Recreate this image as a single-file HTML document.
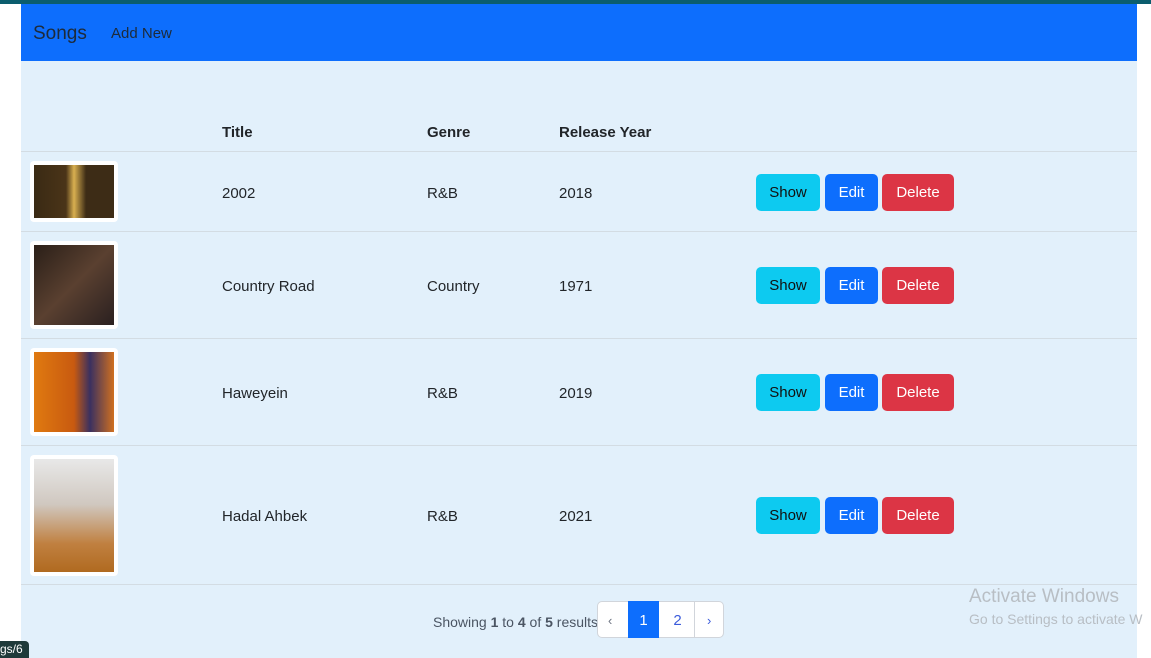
<!DOCTYPE html>
<html><head><style>
body{margin:0;width:1151px;height:658px;background:#fff;font-family:"Liberation Sans",sans-serif;position:relative;overflow:hidden;color:#212529}
.top{position:absolute;left:0;top:0;width:1151px;height:4px;background:#0b5d6e}
.nav{position:absolute;left:21px;top:4px;width:1116px;height:57px;background:#0d6efd}
.nav .b{position:absolute;left:12px;top:19px;font-size:19px;color:#1d2b3a}
.nav .l{position:absolute;left:90px;top:21px;font-size:15px;color:#1d2b3a}
.main{position:absolute;left:21px;top:61px;width:1116px;height:597px;background:#e2f0fb}
.t{position:absolute;font-size:15px}
.th{font-weight:bold}
.hr{position:absolute;left:21px;width:1116px;height:1px;background:#d3dce3}
.img{position:absolute;left:30px;width:88px;background:#fff;border-radius:4px;box-sizing:border-box;padding:4px}
.img div{width:100%;height:100%}
.btn{position:absolute;height:37px;border-radius:5px;font-size:15px;line-height:37px;text-align:center}
.s{background:#0dcaf0;color:#111;width:64px;left:756px}
.e{background:#0d6efd;color:#fff;width:53px;left:825px}
.d{background:#dc3545;color:#fff;width:72px;left:882px}
</style></head><body>
<div class="top"></div>
<div class="nav"><span class="b">Songs</span><span class="l">Add New</span></div>
<div class="main"></div>
<div class="t th" style="left:222px;top:124px">Title</div>
<div class="t th" style="left:427px;top:124px">Genre</div>
<div class="t th" style="left:559px;top:124px">Release Year</div>
<div class="hr" style="top:151px"></div>
<div class="hr" style="top:231px"></div>
<div class="hr" style="top:338px"></div>
<div class="hr" style="top:445px"></div>
<div class="hr" style="top:584px"></div>

<div class="img" style="top:161px;height:61px"><div style="background:linear-gradient(90deg,#3a2a14,#4a3418 40%,#d9b050 50%,#3d2c16 65%)"></div></div>
<div class="img" style="top:241px;height:88px"><div style="background:linear-gradient(135deg,#2a1f18,#5a4030 50%,#2a2020)"></div></div>
<div class="img" style="top:348px;height:88px"><div style="background:linear-gradient(90deg,#e07a10,#c85a10 50%,#3a3060 70%,#d07020)"></div></div>
<div class="img" style="top:455px;height:121px"><div style="background:linear-gradient(180deg,#e8e8e8,#d0c8c0 40%,#c08040 75%,#b06a20)"></div></div>

<div class="t" style="left:222px;top:185px">2002</div><div class="t" style="left:427px;top:185px">R&amp;B</div><div class="t" style="left:559px;top:185px">2018</div>
<div class="btn s" style="top:174px;line-height:38px">Show</div><div class="btn e" style="top:174px;line-height:38px">Edit</div><div class="btn d" style="top:174px;line-height:38px">Delete</div>
<div class="t" style="left:222px;top:278px">Country Road</div><div class="t" style="left:427px;top:278px">Country</div><div class="t" style="left:559px;top:278px">1971</div>
<div class="btn s" style="top:267px;line-height:38px">Show</div><div class="btn e" style="top:267px;line-height:38px">Edit</div><div class="btn d" style="top:267px;line-height:38px">Delete</div>
<div class="t" style="left:222px;top:385px">Haweyein</div><div class="t" style="left:427px;top:385px">R&amp;B</div><div class="t" style="left:559px;top:385px">2019</div>
<div class="btn s" style="top:374px;line-height:38px">Show</div><div class="btn e" style="top:374px;line-height:38px">Edit</div><div class="btn d" style="top:374px;line-height:38px">Delete</div>
<div class="t" style="left:222px;top:508px">Hadal Ahbek</div><div class="t" style="left:427px;top:508px">R&amp;B</div><div class="t" style="left:559px;top:508px">2021</div>
<div class="btn s" style="top:497px;line-height:38px">Show</div><div class="btn e" style="top:497px;line-height:38px">Edit</div><div class="btn d" style="top:497px;line-height:38px">Delete</div>

<div class="t" style="left:433px;top:614px;font-size:14px;color:#4b5563">Showing <b>1</b> to <b>4</b> of <b>5</b> results</div>
<div style="position:absolute;left:597px;top:601px;width:127px;height:37px;background:#fff;border:1px solid #d1d5db;border-radius:5px;box-sizing:border-box"></div>
<div style="position:absolute;left:628px;top:601px;width:31px;height:37px;background:#0d6efd;color:#fff;text-align:center;line-height:39px;font-size:15px">1</div>
<div style="position:absolute;left:608px;top:601px;width:14px;line-height:39px;font-size:13px;color:#6b7280">‹</div>
<div style="position:absolute;left:659px;top:601px;width:37px;line-height:39px;text-align:center;font-size:15px;color:#3b5bdb">2</div>
<div style="position:absolute;left:694px;top:602px;width:1px;height:35px;background:#d1d5db"></div>
<div style="position:absolute;left:707px;top:601px;line-height:39px;font-size:13px;color:#3b5bdb">›</div>
<div style="position:absolute;left:969px;top:586px;font-size:19px;color:#b8bec4">Activate Windows</div>
<div style="position:absolute;left:969px;top:611px;font-size:14px;color:#b8bec4;white-space:nowrap">Go to Settings to activate W</div>
<div style="position:absolute;left:0;top:641px;width:29px;height:17px;background:#1f3a3a;color:#fff;font-size:12px;line-height:17px;border-radius:0 4px 0 0;overflow:hidden">gs/6</div>
</body></html>
